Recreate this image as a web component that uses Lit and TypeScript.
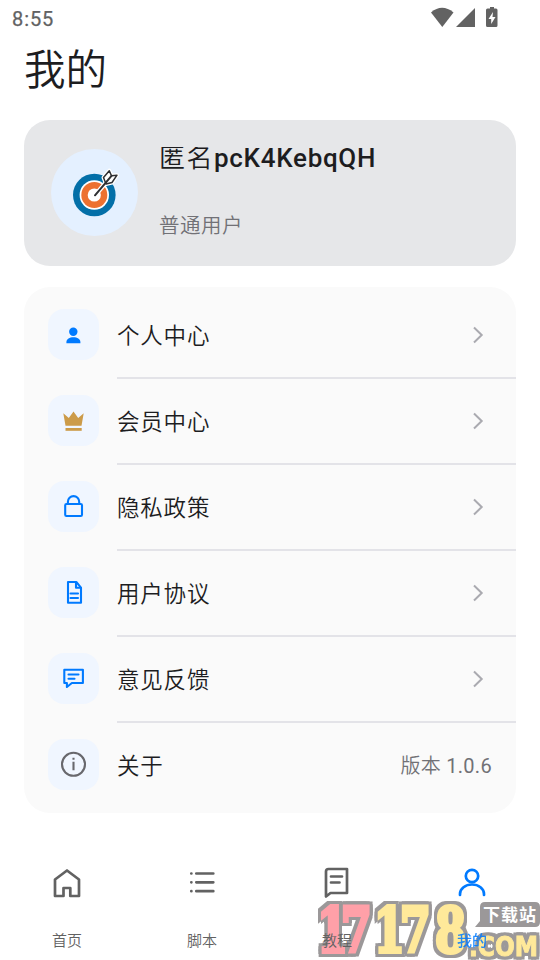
import { LitElement, html, svg, css } from "lit";
import { customElement } from "lit/decorators.js";

const icons = {
  user: svg`<g fill="#007aff"><circle cx="25.300" cy="22.800" r="4.200"/><path d="M18.400 34.300v-1.200c0-3 3.200-4.800 7-4.800s7 1.800 7 4.800v1.200z"/></g>`,
  crown: svg`<g fill="#cc9b49"><path d="M15.300 18.300l5.500 4.600 4.700-6.300 4.700 6.300 5.500-4.600-2.200 12.500h-16z"/><rect x="17.500" y="33" width="16.200" height="2.800"/></g>`,
  lock: svg`<g fill="none" stroke="#007aff" stroke-width="2.100"><rect x="17.200" y="23" width="16.800" height="12" rx="1.300"/><path d="M19.900 23v-2.200a5.600 5.600 0 0 1 11.300 0V23"/></g>`,
  doc: svg`<g fill="none" stroke="#007aff" stroke-width="2.100" stroke-linejoin="round"><path d="M28.300 15h-8.300v20.800h13V20.600z"/><path d="M28 15.500v5.300h5"/><path d="M22.500 26.500h7.500M22.500 31h7.500" stroke-linecap="round"/></g>`,
  chat: svg`<g fill="none" stroke="#007aff" stroke-width="2.100" stroke-linejoin="round" stroke-linecap="round"><path d="M16.300 16.800h18.600v13.200h-11l-5 4v-4h-2.600z"/><path d="M20.500 21.500h10M20.500 25.800h6"/></g>`,
  info: svg`<g fill="none" stroke="#68686d" stroke-width="2.100"><circle cx="25.500" cy="25.300" r="11.500"/><path d="M25.500 22.800v8.400"/><path d="M25.500 18.800v2"/></g>`,
};

const rows = [
  ["user", "个人中心"],
  ["crown", "会员中心"],
  ["lock", "隐私政策"],
  ["doc", "用户协议"],
  ["chat", "意见反馈"],
  ["info", "关于"],
] as const;

const tabs = [
  { label: "首页", icon: svg`<path d="M18 5.500L30 14.500v16.500H21.300V23h-6.800v8H6V14.500z" />` },
  { label: "脚本", icon: svg`<path d="M12.300 8.500h17M12.300 17.300h17M12.300 26.200h17M7.300 8.500h.1M7.300 17.300h.1M7.300 26.200h.1" />` },
  { label: "教程", icon: svg`<path d="M7 31V6.500Q7 4 9.500 4H28v24H11.500L7 31.500M12 11.500h11M12 17.500h8.500" />` },
  { label: "我的", icon: svg`<circle cx="18" cy="11" r="6.200"/><path d="M6 30v-1a12 9.500 0 0 1 24 0v1" />` },
];

@customElement("app-root")
export class AppRoot extends LitElement {
  static styles = css`
    :host { display: flex; flex-direction: column; box-sizing: border-box; width: 540px; height: 960px; overflow: hidden; position: relative; background: #fff; color: #1d1d1f; font-family: Roboto, "Noto Sans CJK SC", sans-serif; }
    svg { display: block; }
    .status { height: 36px; box-sizing: border-box; padding: 0 41px 0 12px; display: flex; align-items: flex-start; justify-content: space-between; color: #626262; font-size: 20px; line-height: 38px; letter-spacing: .9px; font-weight: 400; -webkit-text-stroke: .25px; }
    .status svg { margin-top: 4px; }
    h1 { margin: 2px 0 16px 24px; height: 66px; line-height: 66px; font-size: 41.500px; font-weight: 350; }
    .profile { margin: 0 24px; height: 146px; border-radius: 26px; background: #e6e7e9; display: flex; align-items: flex-start; }
    .avatar { margin: 29px 21px 0 27px; width: 87px; height: 87px; border-radius: 50%; background: #e4f0ff; }
    .name { margin-top: 27px; height: 30px; line-height: 22px; overflow: hidden; font-size: 26px; font-weight: 500; letter-spacing: .7px; }
    .name .cjk { font-weight: 350; letter-spacing: 1.500px; }
    .level { margin-top: 34px; line-height: 30px; font-size: 20.500px; font-weight: 350; letter-spacing: .5px; color: #717176; }
    .menu { margin: 21px 24px 0; padding: 6px 0; border-radius: 26px; background: #fafafa; }
    .row { display: flex; height: 86px; padding-left: 24px; gap: 18px; box-sizing: border-box; }
    .row:last-child { height: 84px; }
    .tile { margin-top: 16px; width: 51px; height: 51px; border-radius: 16px; background: #f0f6ff; }
    .cell { flex: 1; padding: 0 24px 2px 0; display: flex; align-items: center; justify-content: space-between; border-bottom: 2px solid #e3e3e8; font-size: 22.500px; font-weight: 350; letter-spacing: .8px; }
    .cell svg { margin-top: 1px; }
    .row:last-child .cell { border: 0; }
    .version { font-size: 20px; font-weight: 350; color: #717176; letter-spacing: .3px; }
    .version b { font-weight: 400; }
    .tabs { position: relative; z-index: 1; margin: auto 1px 0 -1px; height: 95px; display: flex; }
    .tab { flex: 1; display: flex; flex-direction: column; align-items: center; color: #626262; font-size: 15px; font-weight: 350; line-height: 20px; gap: 30px; }
    .tab span { padding-left: 1px; }
    .tab svg { fill: none; stroke: currentColor; stroke-width: 2.700; stroke-linecap: round; stroke-linejoin: round; }
    .tab.active { color: #007aff; }
    .active span { font-weight: 500; opacity: .85; }
    .mark { position: absolute; left: 314px; top: 896px; pointer-events: none; }
    .outlined { filter: drop-shadow(3px 0 0 #9b9899) drop-shadow(-3px 0 0 #9b9899) drop-shadow(0 3px 0 #9b9899) drop-shadow(0 -3px 0 #9b9899); }
    .red { fill: #ffa0a8; stroke: #ffa0a8; }
    .yellow { fill: #ffe99a; stroke: #ffe99a; }
    .big { font: 700 62px "DejaVu Serif", serif; stroke-width: 4px; }
    .dot { font: 700 27px "DejaVu Sans", sans-serif; stroke-width: 1px; }
    .site { font: 700 17px "Noto Sans CJK SC", sans-serif; }
  `;

  render() {
    return html`
      <div class="status"><span>8:55</span>
        <svg width="68" height="24" viewBox="0 0 68 24" fill="#626262"><path d="M0 8.500Q11-.8 22.500 8.500L11.300 23z"/><path d="M25 23h19V4z"/><path fill-rule="evenodd" d="M58 4.500h1V3h4v1.500h2q1.500 0 1.500 1.500V21.500q0 1.500-1.500 1.500H56.500Q55 23 55 21.500V6q0-1.500 1.500-1.500zM62 8l-4.500 7h2.700v5L64.500 13h-3z"/></svg>
      </div>
      <h1>我的</h1>
      <section class="profile">
        <svg class="avatar" viewBox="0 0 87 87"><circle cx="43.300" cy="46" r="21.300" fill="#036fa8"/><circle cx="43.300" cy="46" r="14.700" fill="#fff"/><circle cx="43.300" cy="46" r="13" fill="#ed7130"/><circle cx="43.300" cy="46" r="6.600" fill="#fff"/><path d="M46 44L55 33.500" stroke="#fff" stroke-width="4.500"/><path d="M55 35l-2.500-6.500 5.800-6.800 2.200 5 5.500-.5-5 7.300z" fill="#fff" stroke="#fff" stroke-width="4" stroke-linejoin="round"/><path d="M55 35l-2.500-6.500 5.800-6.800 2.200 5 5.500-.5-5 7.300z" fill="#fff" stroke="#2f3033" stroke-width="1.500" stroke-linejoin="round"/><path d="M44 46.300L60.500 26.800" stroke="#2f3033" stroke-width="2" stroke-linecap="round"/></svg>
        <div><div class="name"><span class="cjk">匿名</span>pcK4KebqQH</div><div class="level">普通用户</div></div>
      </section>
      <section class="menu">
        ${rows.map(([k, label]) => html`<div class="row"><svg class="tile" viewBox="0 0 51 51">${icons[k]}</svg><div class="cell"><span>${label}</span>${k === "info"
          ? html`<span class="version">版本 <b>1.0.6</b></span>`
          : html`<svg width="28" height="20" viewBox="0 0 28 20" fill="none" stroke="#aaaab0" stroke-width="2"><path d="M10 2.500l7.700 7.500-7.700 7.500"/></svg>`}</div></div>`)}
      </section>
      <nav class="tabs">
        ${tabs.map((t, i) => html`<div class="tab ${i === 3 ? "active" : ""}"><svg width="36" height="36" viewBox="0 0 36 36">${t.icon}</svg><span>${t.label}</span></div>`)}
      </nav>
      <svg class="mark" width="226" height="64" viewBox="0 0 226 64">
        <g class="outlined"><text class="big red" transform="scale(.72 1)" x="4 37" y="56">17</text></g>
        <g class="outlined"><text class="big yellow" transform="scale(.72 1)" x="83 119 168" y="56">178</text></g>
        <g class="outlined"><text class="dot yellow" x="155" y="60" textLength="69" lengthAdjust="spacingAndGlyphs">.COM</text></g>
        <path d="M171 6h50q5 0 5 5v15q0 5-5 5h-60l5-6V11q0-5 5-5z" fill="#9b9899"/>
        <text class="site" x="169" y="25" fill="#fff" textLength="53">下载站</text>
      </svg>
    `;
  }
}
